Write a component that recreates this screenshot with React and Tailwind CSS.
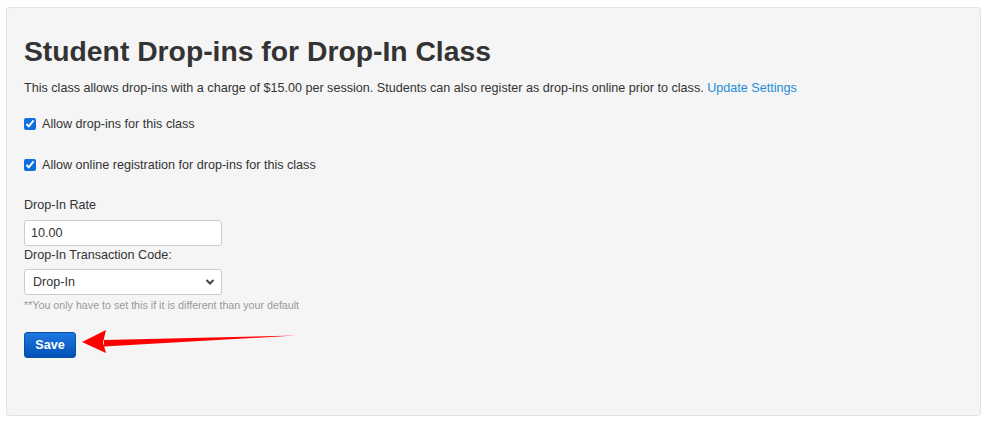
import React from 'react';

function SaveArrow() {
  return (
    <svg
      className="absolute left-0 top-0 pointer-events-none"
      width="985"
      height="421"
      viewBox="0 0 985 421"
    >
      <path d="M296 335.5 L104 340 L104 346.5 Z" fill="#ff0000" />
      <path d="M82 342 L106 330 L103 342.5 L106 353 Z" fill="#ff0000" />
    </svg>
  );
}

export default function App() {
  return (
    <div className="relative w-[985px] h-[421px] bg-white font-['Liberation_Sans',Arial,sans-serif] text-[#333]">
      <div className="ml-[6px] pt-[7px]">
        <div className="w-[975px] h-[409px] border border-[#e3e3e3] rounded-[3px] bg-[#f5f5f5] px-[17px] pt-[27px]">
          <h2 className="text-[28.3px] leading-[33px] font-bold">Student Drop-ins for Drop-In Class</h2>
          <p className="mt-[11px] text-[12.6px] leading-[18px]">
            This class allows drop-ins with a charge of $15.00 per session. Students can also register as drop-ins online prior to class.{' '}
            <a href="#" className="text-[#1f8dd6]">Update Settings</a>
          </p>

          <label className="mt-[18px] flex items-center gap-[6px] text-[12.6px] leading-[18px]">
            <input type="checkbox" defaultChecked className="w-[12px] h-[12px] m-0 accent-[#0b6fe0]" />
            Allow drop-ins for this class
          </label>
          <label className="mt-[23px] flex items-center gap-[6px] text-[12.6px] leading-[18px]">
            <input type="checkbox" defaultChecked className="w-[12px] h-[12px] m-0 accent-[#0b6fe0]" />
            Allow online registration for drop-ins for this class
          </label>

          <div className="mt-[22px] text-[12.6px] leading-[18px]">Drop-In Rate</div>
          <input
            type="text"
            defaultValue="10.00"
            className="mt-[6px] block w-[198px] h-[26px] px-[6px] bg-white border border-[#ccc] rounded-[3px] text-[12.6px] text-[#333] outline-none"
          />
          <div className="text-[12.6px] leading-[18px]">Drop-In Transaction Code:</div>
          <div className="relative mt-[5px] w-[198px]">
            <select className="block w-full h-[26px] pl-[8px] pr-[24px] appearance-none bg-white border border-[#ccc] rounded-[3px] text-[12.6px] text-[#333] outline-none">
              <option>Drop-In</option>
            </select>
            <svg
              className="absolute right-[7px] top-[9px] pointer-events-none"
              width="10"
              height="8"
              viewBox="0 0 10 8"
            >
              <path d="M1.5 2 L5 5.5 L8.5 2" fill="none" stroke="#444" strokeWidth="2" />
            </svg>
          </div>
          <div className="mt-[3px] text-[10.7px] leading-[14px] text-[#999]">
            **You only have to set this if it is different than your default
          </div>

          <button
            type="button"
            className="mt-[20px] w-[52px] h-[26px] rounded-[3px] border border-[#0a4fa8] bg-gradient-to-b from-[#1e78e0] to-[#0351b8] text-white text-[12.6px] font-bold"
          >
            Save
          </button>
        </div>
      </div>
      <SaveArrow />
    </div>
  );
}
